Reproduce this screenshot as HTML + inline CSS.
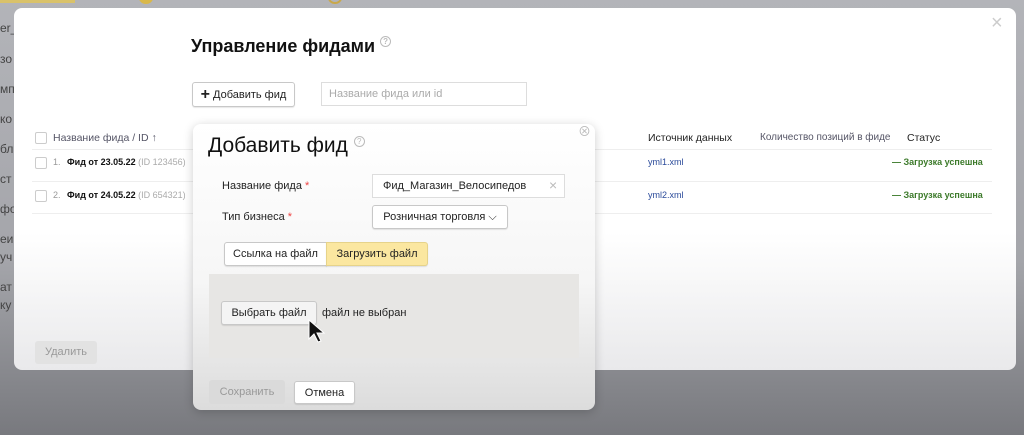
<!DOCTYPE html>
<html><head><meta charset="utf-8"><style>
*{box-sizing:border-box;margin:0;padding:0}
body{width:1024px;height:435px;overflow:hidden;position:relative;font-family:"Liberation Sans","Noto Sans CJK SC",sans-serif;background:linear-gradient(#b3b4b9 0%,#a4a5aa 60%,#78797e 100%);}
.abs{position:absolute}
.side{position:absolute;left:0;font-size:12px;color:#444;}
.outer{position:absolute;left:14px;top:8px;width:1002px;height:362px;border-radius:8px;background:linear-gradient(#fff 0%,#fff 62%,#e9e9eb 100%);}
.dlg{position:absolute;left:193px;top:124px;width:402px;height:286px;border-radius:8px;background:linear-gradient(#fff 0%,#f6f6f6 55%,#dcdcdc 100%);box-shadow:0 2px 10px rgba(0,0,0,.2);}
.btn{position:absolute;border:1px solid #c8c8c8;border-radius:3px;background:#fff;font-size:11px;color:#222;display:flex;align-items:center;justify-content:center;box-shadow:0 1px 1px rgba(0,0,0,.1)}
.t{position:absolute;font-size:10.5px;white-space:nowrap}
.cb{position:absolute;width:12px;height:12px;border:1px solid #ccc;border-radius:2px;background:#fff}
.q{display:inline-block;width:11px;height:11px;border:1px solid #bbb;border-radius:50%;font-size:8px;color:#bbb;text-align:center;line-height:9px;vertical-align:top}
.hr{position:absolute;height:1px;background:#eee}
</style></head><body>
<div class="abs" style="left:0;top:0;width:75px;height:3px;background:#d9c26a"></div>
<div class="abs" style="left:139px;top:-8px;width:14px;height:12px;border-radius:50%;background:#d9b84a"></div>
<div class="abs" style="left:328px;top:-8px;width:14px;height:12px;border-radius:50%;border:2px solid #c9a84a"></div>
<div class="side" style="top:21px">er_</div>
<div class="side" style="top:52px">зо</div>
<div class="side" style="top:82px">мп</div>
<div class="side" style="top:112px">ко</div>
<div class="side" style="top:142px">бл</div>
<div class="side" style="top:172px">ст</div>
<div class="side" style="top:202px">фо</div>
<div class="side" style="top:232px">еи</div>
<div class="side" style="top:250px">уч</div>
<div class="side" style="top:280px">ат</div>
<div class="side" style="top:298px">ку</div>

<div class="outer">
  <div class="t" style="left:977px;top:4px;font-size:20px;color:#ccc">×</div>
  <div class="t" style="left:177px;top:28px;font-size:18px;font-weight:bold;color:#111">Управление фидами <span class="q">?</span></div>
  <div class="btn" style="left:178px;top:74px;width:103px;height:25px;"><b style="font-size:16px;margin-right:3px">+</b>Добавить фид</div>
  <div class="abs" style="left:307px;top:74px;width:206px;height:24px;border:1px solid #ddd;"></div>
  <div class="t" style="left:315px;top:80px;color:#aaa;font-size:11px">Название фида или id</div>
  <div class="cb" style="left:21px;top:124px"></div>
  <div class="t" style="left:39px;top:124px;color:#556">Название фида / ID ↑</div>
  <div class="hr" style="left:18px;top:141px;width:960px"></div>
  <div class="cb" style="left:21px;top:149px"></div>
  <div class="t" style="left:39px;top:149px;font-size:9px;color:#999">1.</div>
  <div class="t" style="left:53px;top:149px;font-size:9px;font-weight:bold;color:#111">Фид от 23.05.22 <span style="font-weight:normal;color:#aaa">(ID 123456)</span></div>
  <div class="hr" style="left:18px;top:173px;width:960px"></div>
  <div class="cb" style="left:21px;top:182px"></div>
  <div class="t" style="left:39px;top:182px;font-size:9px;color:#999">2.</div>
  <div class="t" style="left:53px;top:182px;font-size:9px;font-weight:bold;color:#111">Фид от 24.05.22 <span style="font-weight:normal;color:#aaa">(ID 654321)</span></div>
  <div class="hr" style="left:18px;top:205px;width:960px"></div>
  <div class="t" style="left:634px;top:124px;color:#222">Источник данных</div>
  <div class="t" style="left:746px;top:124px;color:#556;font-size:10px">Количество позиций в фиде</div>
  <div class="t" style="left:893px;top:124px;color:#222">Статус</div>
  <div class="t" style="left:634px;top:149px;font-size:9px;color:#2a4a9a">yml1.xml</div>
  <div class="t" style="left:634px;top:182px;font-size:9px;color:#2a4a9a">yml2.xml</div>
  <div class="t" style="left:878px;top:149px;font-size:9px;font-weight:bold;color:#3c7a2a">— Загрузка успешна</div>
  <div class="t" style="left:878px;top:182px;font-size:9px;font-weight:bold;color:#3c7a2a">— Загрузка успешна</div>
  <div class="abs" style="left:21px;top:333px;width:62px;height:23px;background:#e2e2e2;border-radius:3px;font-size:11px;color:#999;text-align:center;line-height:23px">Удалить</div>
</div>

<div class="dlg">
  <div class="t" style="left:385px;top:-3px;font-size:13px;color:#bbb">⊗</div>
  <div class="t" style="left:15px;top:10px;font-size:21px;color:#111">Добавить фид <span class="q" style="margin-top:2px">?</span></div>
  <div class="t" style="left:29px;top:56px;font-size:11px;color:#222">Название фида <span style="color:#e44">*</span></div>
  <div class="abs" style="left:179px;top:50px;width:193px;height:24px;border:1px solid #ddd;background:#fff"></div>
  <div class="t" style="left:190px;top:56px;font-size:11px;color:#222">Фид_Магазин_Велосипедов</div>
  <div class="t" style="left:356px;top:53px;font-size:14px;color:#bbb">×</div>
  <div class="t" style="left:29px;top:87px;font-size:11px;color:#222">Тип бизнеса <span style="color:#e44">*</span></div>
  <div class="btn" style="left:179px;top:81px;width:136px;height:24px;">Розничная торговля ⌵</div>
  <div class="btn" style="left:31px;top:118px;width:103px;height:24px;border-radius:3px 0 0 3px">Ссылка на файл</div>
  <div class="btn" style="left:133px;top:118px;width:102px;height:24px;background:#fbe7a0;border-color:#e6d38a;border-radius:0 3px 3px 0">Загрузить файл</div>
  <div class="abs" style="left:16px;top:150px;width:370px;height:84px;background:#e7e6e4"></div>
  <div class="btn" style="left:28px;top:177px;width:96px;height:24px;background:#f4f4f4">Выбрать файл</div>
  <div class="t" style="left:129px;top:183px;font-size:11px;color:#222">файл не выбран</div>
  <svg class="abs" style="left:114px;top:195px" width="20" height="26" viewBox="0 0 20 26"><path d="M2 1 L2 20 L7 15 L11 23 L14 22 L10 14 L17 14 Z" fill="#111" stroke="#fff" stroke-width="1"/></svg>
  <div class="abs" style="left:16px;top:256px;width:76px;height:24px;background:#dadada;border-radius:3px;font-size:11px;color:#999;text-align:center;line-height:24px">Сохранить</div>
  <div class="btn" style="left:101px;top:257px;width:61px;height:23px">Отмена</div>
</div>
</body></html>
